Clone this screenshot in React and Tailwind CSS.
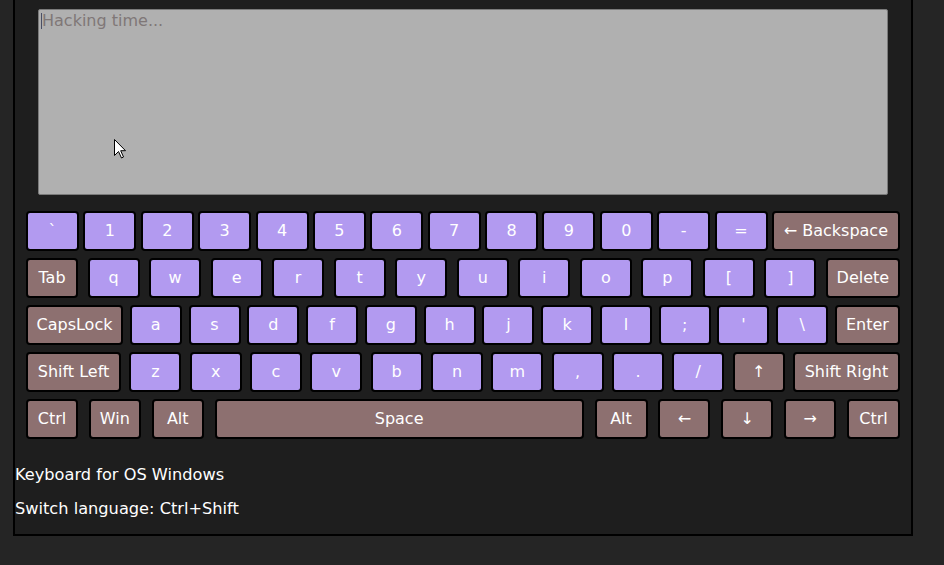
import React from 'react';

const PURPLE = 'bg-[#b29af0]';
const BROWN = 'bg-[#8d7070]';

// [label, width, dark]
const ROWS = [
  [['`', 53], ['1', 53], ['2', 53], ['3', 53], ['4', 53], ['5', 53], ['6', 53], ['7', 53], ['8', 53], ['9', 53], ['0', 53], ['-', 53], ['=', 53], ['← Backspace', 128, true]],
  [['Tab', 52, true], ['q', 52], ['w', 52], ['e', 52], ['r', 52], ['t', 52], ['y', 52], ['u', 52], ['i', 52], ['o', 52], ['p', 52], ['[', 52], [']', 52], ['Delete', 74, true]],
  [['CapsLock', 97, true], ['a', 52], ['s', 52], ['d', 52], ['f', 52], ['g', 52], ['h', 52], ['j', 52], ['k', 52], ['l', 52], [';', 52], ["'", 52], ['\\', 52], ['Enter', 65, true]],
  [['Shift Left', 95, true], ['z', 52], ['x', 52], ['c', 52], ['v', 52], ['b', 52], ['n', 52], ['m', 52], [',', 52], ['.', 52], ['/', 52], ['↑', 52, true], ['Shift Right', 107, true]],
  [['Ctrl', 52, true], ['Win', 52, true], ['Alt', 52, true], ['Space', 369, true], ['Alt', 53, true], ['←', 52, true], ['↓', 52, true], ['→', 52, true], ['Ctrl', 53, true]],
];

function Key({ label, width, dark }) {
  return (
    <div
      className={`h-[40px] shrink-0 flex items-center justify-center border-2 border-black rounded-[4px] text-white text-[16px] ${dark ? BROWN : PURPLE}`}
      style={{ width }}
    >
      {label}
    </div>
  );
}

export default function App() {
  return (
    <div className="min-h-screen bg-[#252525] font-['DejaVu_Sans',sans-serif] relative">
      <div className="ml-[13px] w-[900px] border-x-2 border-b-2 border-black bg-[#1e1e1e]">
        {/* Text input */}
        <div className="pt-[9px] relative">
          <textarea
            placeholder="Hacking time..."
            className="block mx-auto w-[850px] h-[186px] bg-[#b0b0b0] border border-[#7a7a7a] rounded-[2px] px-[3px] py-[1px] text-[16px] leading-[19px] text-black placeholder:text-[#7f7777] resize-none outline-none"
          />
          <span className="absolute left-[26px] top-[13px] w-px h-[16px] bg-[#4a4f66]" />
        </div>

        {/* Keyboard */}
        <div className="px-[11px] pt-[16px] pb-[11px] flex flex-col gap-[7px]">
          {ROWS.map((row, i) => (
            <div key={i} className="flex justify-between">
              {row.map(([label, width, dark], j) => (
                <Key key={j} label={label} width={width} dark={dark} />
              ))}
            </div>
          ))}
        </div>

        <p className="my-4 text-white text-[16.2px] leading-[18px]">Keyboard for OS Windows</p>
        <p className="my-4 text-white text-[16.2px] leading-[18px]">Switch language: Ctrl+Shift</p>
      </div>

      {/* mouse pointer */}
      <svg className="absolute left-[114px] top-[139px]" width="13" height="20" viewBox="0 0 13 20">
        <path d="M0.5 0.5 L0.5 16.5 L4.5 12.5 L7.5 19 L9.5 18 L6.7 11.7 L11.5 11.7 Z" fill="#fff" stroke="#000" strokeWidth="1" />
      </svg>
    </div>
  );
}
